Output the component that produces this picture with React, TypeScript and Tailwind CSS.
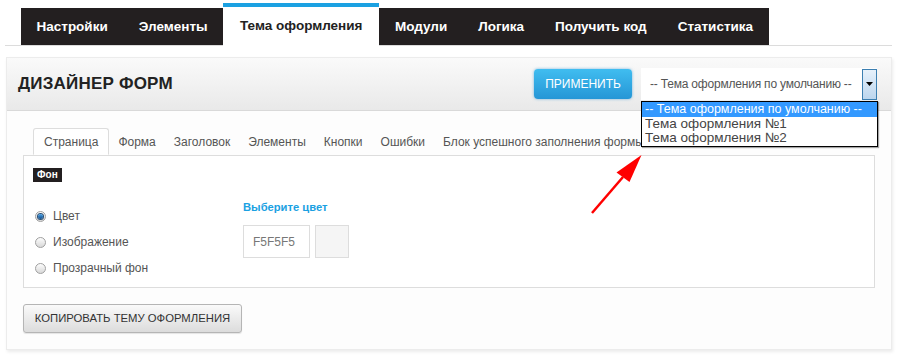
import React from 'react';

// ── Top navigation ───────────────────────────────────────────────────────────

const NAV = ['Настройки', 'Элементы', 'Тема оформления', 'Модули', 'Логика', 'Получить код', 'Статистика'];
const ACTIVE_NAV = 'Тема оформления';

const SUB_TABS = ['Страница', 'Форма', 'Заголовок', 'Элементы', 'Кнопки', 'Ошибки', 'Блок успешного заполнения формы'];

const THEMES = ['-- Тема оформления по умолчанию --', 'Тема оформления №1', 'Тема оформления №2'];

function TopNav() {
  return (
    <div className="pt-[3px] pl-[5px] w-[892px]">
      <div className="flex items-end border-b border-[#dcdcdc] pl-[16px]">
        {NAV.map((item) =>
          item === ACTIVE_NAV ? (
            <div
              key={item}
              className="h-[43px] -mb-px flex items-center px-[17px] bg-white border-t-4 border-[#1ba1e2] text-[13.5px] font-bold text-[#222] pb-px"
            >
              {item}
            </div>
          ) : (
            <div
              key={item}
              className="h-[37px] flex items-center px-[15.5px] bg-[#231f20] text-[13.5px] font-bold text-white pt-px"
            >
              {item}
            </div>
          ),
        )}
      </div>
    </div>
  );
}

// ── Radio ────────────────────────────────────────────────────────────────────

function Radio({ checked, label }: { checked?: boolean; label: string }) {
  return (
    <div className="h-[26px] flex items-center gap-[7px]">
      <span className="w-[11px] h-[11px] rounded-full border border-[#a0a0a0] bg-gradient-to-b from-[#fdfdfd] to-[#d8d8d8] flex items-center justify-center">
        {checked && <span className="w-[5px] h-[5px] rounded-full bg-gradient-to-b from-[#4aa3e8] to-[#114e8c] ring-1 ring-[#2c4f73]" />}
      </span>
      <span className="text-[12px] text-[#555]">{label}</span>
    </div>
  );
}

// ── Arrow annotation ─────────────────────────────────────────────────────────

function RedArrow() {
  return (
    <svg className="absolute left-0 top-0 pointer-events-none" width="900" height="358" viewBox="0 0 900 358">
      <line x1="592" y1="213" x2="623" y2="177" stroke="#ff0000" strokeWidth="2.5" />
      <polygon points="641.5,155 616.5,172.5 629.5,182" fill="#ff0000" />
    </svg>
  );
}

// ── Page ─────────────────────────────────────────────────────────────────────

export default function App() {
  return (
    <div className="relative w-[900px] h-[358px] bg-white overflow-hidden font-['Liberation_Sans',Arial,sans-serif]">
      <TopNav />

      {/* Panel */}
      <div className="mt-[11px] ml-[6px] w-[886px] h-[293px] bg-[#fdfdfd] border border-[#ececec] shadow-[1px_2px_3px_rgba(0,0,0,0.08)]">
        {/* Header */}
        <div className="h-[53px] flex items-center pl-[11px] pr-[14px] bg-gradient-to-b from-[#fafafa] to-[#e9e9e9] border-b border-[#d9d9d9]">
          <h1 className="text-[17px] font-bold text-[#222] tracking-[0.2px]">ДИЗАЙНЕР ФОРМ</h1>
          <div className="ml-auto flex items-center gap-[9px]">
            <button className="h-[30px] w-[98px] rounded-[4px] bg-gradient-to-b from-[#40bdf0] to-[#2596d6] text-white text-[12px] shadow-[0_0_3px_rgba(30,140,210,0.6)]">
              ПРИМЕНИТЬ
            </button>
            <div className="h-[32px] w-[236px] bg-white flex items-center">
              <span className="flex-1 pl-[9px] text-[12px] text-[#555] tracking-[-0.2px]">-- Тема оформления по умолчанию --</span>
              <span className="h-[31px] w-[15px] border border-[#3c7fb1] bg-gradient-to-b from-[#e6f1fb] to-[#bcd6ee] flex items-center justify-center">
                <svg width="7" height="4" viewBox="0 0 7 4">
                  <polygon points="0,0 7,0 3.5,4" fill="#000" />
                </svg>
              </span>
            </div>
          </div>
        </div>

        {/* Body */}
        <div className="px-[16px] pt-[17px]">
          <div className="flex pl-[10px] text-[12px] text-[#555]">
            {SUB_TABS.map((tab, i) =>
              i === 0 ? (
                <div key={tab} className="h-[27px] -mb-px px-[10px] flex items-center bg-white border border-[#ddd] border-b-white rounded-t-[3px]">
                  {tab}
                </div>
              ) : (
                <div key={tab} className="h-[27px] px-[9px] flex items-center">
                  {tab}
                </div>
              ),
            )}
          </div>

          <div className="h-[133px] bg-white border border-[#ddd] pt-[12px] pl-[9px]">
            <div className="w-fit h-[14px] px-[4px] bg-[#231f20] text-white text-[10px] font-bold leading-[14px]">Фон</div>
            <div className="flex mt-[17px]">
              <div className="w-[210px] pt-[4px] pl-[2px]">
                <Radio checked label="Цвет" />
                <Radio label="Изображение" />
                <Radio label="Прозрачный фон" />
              </div>
              <div>
                <div className="text-[11.2px] font-bold text-[#1ba1e2] leading-[16px]">Выберите цвет</div>
                <div className="flex gap-[5px] mt-[10px]">
                  <div className="w-[67px] h-[33px] border border-[#ddd] bg-white flex items-center pl-[9px] text-[12px] text-[#777]">
                    F5F5F5
                  </div>
                  <div className="w-[34px] h-[33px] border border-[#ddd] bg-[#f5f5f5]" />
                </div>
              </div>
            </div>
          </div>

          <button className="mt-[16px] h-[29px] w-[219px] rounded-[3px] border border-[#b5b5b5] bg-gradient-to-b from-[#fafafa] to-[#dcdcdc] text-[11.3px] text-[#333] shadow-[0_1px_1px_rgba(0,0,0,0.1)]">
            КОПИРОВАТЬ ТЕМУ ОФОРМЛЕНИЯ
          </button>
        </div>
      </div>

      {/* Opened select list */}
      <div className="absolute left-[641px] top-[101px] w-[237px] bg-white border border-[#000] shadow-[1px_1px_1px_rgba(0,0,0,0.35)] text-[13.5px] leading-[14.5px] text-[#444]">
        {THEMES.map((t, i) => (
          <div key={t} className={i === 0 ? 'px-[3px] bg-[#3399ff] text-white text-[12.5px]' : 'px-[3px]'}>
            {t}
          </div>
        ))}
      </div>

      <RedArrow />
    </div>
  );
}
